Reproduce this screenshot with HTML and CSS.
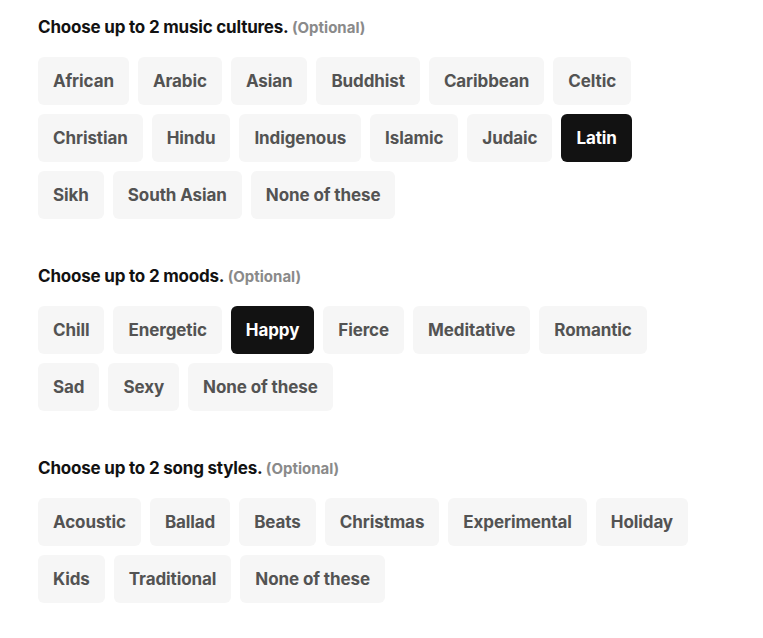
FILE: index.html
```html
<!DOCTYPE html>
<html>
<head>
	<meta charset="UTF-8">
	<title>Song details</title>
	<link rel="stylesheet" href="styles.css">
</head>
<body>

	<div class="group">
		<h3>Choose up to 2 music cultures. <span class="optional">(Optional)</span></h3>
		<div class="chips">
			<button class="chip">African</button>
			<button class="chip">Arabic</button>
			<button class="chip">Asian</button>
			<button class="chip">Buddhist</button>
			<button class="chip">Caribbean</button>
			<button class="chip">Celtic</button>
			<button class="chip">Christian</button>
			<button class="chip">Hindu</button>
			<button class="chip">Indigenous</button>
			<button class="chip">Islamic</button>
			<button class="chip">Judaic</button>
			<button class="chip selected">Latin</button>
			<button class="chip">Sikh</button>
			<button class="chip">South Asian</button>
			<button class="chip">None of these</button>
		</div>
	</div>

	<div class="group">
		<h3>Choose up to 2 moods. <span class="optional">(Optional)</span></h3>
		<div class="chips">
			<button class="chip">Chill</button>
			<button class="chip">Energetic</button>
			<button class="chip selected">Happy</button>
			<button class="chip">Fierce</button>
			<button class="chip">Meditative</button>
			<button class="chip">Romantic</button>
			<button class="chip">Sad</button>
			<button class="chip">Sexy</button>
			<button class="chip">None of these</button>
		</div>
	</div>

	<div class="group">
		<h3>Choose up to 2 song styles. <span class="optional">(Optional)</span></h3>
		<div class="chips">
			<button class="chip">Acoustic</button>
			<button class="chip">Ballad</button>
			<button class="chip">Beats</button>
			<button class="chip">Christmas</button>
			<button class="chip">Experimental</button>
			<button class="chip">Holiday</button>
			<button class="chip">Kids</button>
			<button class="chip">Traditional</button>
			<button class="chip">None of these</button>
		</div>
	</div>

</body>
</html>
```

FILE: styles.css
```css
* { margin: 0; padding: 0; box-sizing: border-box; }

html, body {
	background: #fff;
	font-family: Inter, "Noto Sans", sans-serif;
}

body {
	padding: 17px 0 0 38px;
}

.group {
	width: 662px;
	margin-bottom: 47px;
}

h3 {
	height: 20px;
	font-size: 17px;
	line-height: 20px;
	font-weight: 700;
	letter-spacing: -0.2px;
	color: #121212;
	margin-bottom: 20px;
}

.optional {
	font-size: 15px;
	line-height: 1;
	letter-spacing: 0;
	color: #8a8a8a;
}

.chips {
	display: flex;
	flex-wrap: wrap;
	gap: 9px;
}

.chip {
	height: 48px;
	padding: 0 15px;
	border: 0;
	border-radius: 6px;
	background: #f6f6f6;
	color: #535353;
	font-family: inherit;
	font-size: 17px;
	font-weight: 700;
	letter-spacing: -0.1px;
}

.chip.selected {
	background: #121212;
	color: #fff;
}
```
